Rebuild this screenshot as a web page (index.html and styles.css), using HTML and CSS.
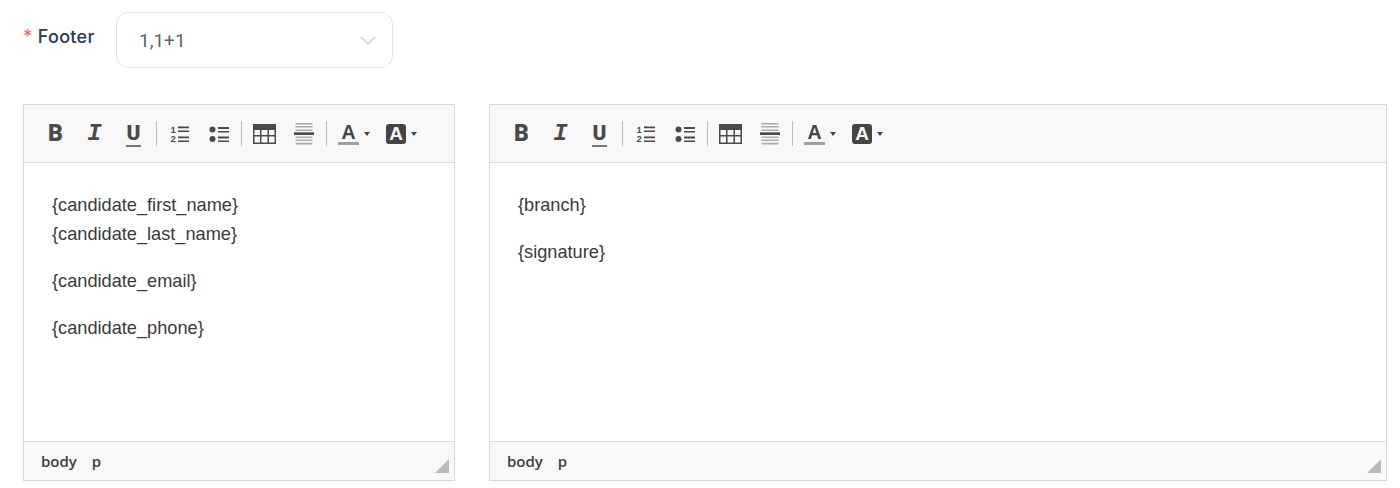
FILE: index.html
```html
<!DOCTYPE html>
<html lang="en">
<head>
<meta charset="utf-8">
<title>Footer</title>
<link rel="stylesheet" href="styles.css">
</head>
<body>
<svg class="defs" width="0" height="0" aria-hidden="true">
  <symbol id="i-ul" viewBox="0 0 20 18">
    <circle cx="3.500" cy="4.500" r="3"/><circle cx="3.500" cy="14" r="3"/>
    <path d="M9 2h11v2H9zM9 6h11v1.500H9zM9 11.500h11v2H9zM9 15.500h11V17H9z"/>
  </symbol>
  <symbol id="i-ol" viewBox="0 0 18 18">
    <path d="M7 1.500h11v1.700H7zM7 5.500h11V7H7zM7 11.500h11v1.700H7zM7 15.500h11V17H7z"/>
  </symbol>
  <symbol id="i-table" viewBox="0 0 23 20">
    <path fill-rule="evenodd" d="M0 0h23v20H0zM1.500 6v5h5.500V6zM8.500 6v5h6V6zM16 6v5h5.500V6zM1.500 12.500v6h5.500v-6zM8.500 12.500v6h6v-6zM16 12.500v6h5.500v-6z"/>
  </symbol>
  <symbol id="i-hr" viewBox="0 0 20 22">
    <path class="soft" d="M1.500 0h17v1.500h-17zM1.500 3h17v1.500h-17zM1.500 6.500h17V8h-17zM1.500 13.500h17V15h-17zM1.500 16.500h17V18h-17zM1.500 19.800h17v1.700h-17z"/>
    <path d="M0 9.300h20V12H0z"/>
  </symbol>
</svg>

<main class="page">
  <div class="field">
    <label class="field-label"><span class="req">*</span> Footer</label>
    <div class="select">
      <span class="select-value">1,1+1</span>
      <svg class="chevron" width="16" height="9" viewBox="0 0 16 9"><path d="M1 1l7 7 7-7" fill="none" stroke="currentColor" stroke-width="1.100"/></svg>
    </div>
  </div>

  <div class="editors">
    <section class="editor editor-narrow">
      <div class="toolbar">
        <span class="tool"><span class="glyph">B</span></span>
        <span class="tool"><span class="glyph italic">I</span></span>
        <span class="tool"><span class="glyph under">U</span></span>
        <i class="sep"></i>
        <span class="tool"><span class="ol"><span class="nums">1<br>2</span><svg class="ic" width="18" height="18"><use href="#i-ol"/></svg></span></span>
        <span class="tool"><svg class="ic" width="20" height="18"><use href="#i-ul"/></svg></span>
        <i class="sep"></i>
        <span class="tool"><svg class="ic" width="23" height="20"><use href="#i-table"/></svg></span>
        <span class="tool"><svg class="ic" width="20" height="22"><use href="#i-hr"/></svg></span>
        <i class="sep"></i>
        <span class="tool split"><span class="fore">A</span><b class="caret"></b></span>
        <span class="tool split"><span class="back">A</span><b class="caret"></b></span>
      </div>
      <div class="content">
        <p>{candidate_first_name}<br>{candidate_last_name}</p>
        <p>{candidate_email}</p>
        <p>{candidate_phone}</p>
      </div>
      <div class="status"><span>body</span><span>p</span><i class="grip"></i></div>
    </section>

    <section class="editor editor-wide">
      <div class="toolbar">
        <span class="tool"><span class="glyph">B</span></span>
        <span class="tool"><span class="glyph italic">I</span></span>
        <span class="tool"><span class="glyph under">U</span></span>
        <i class="sep"></i>
        <span class="tool"><span class="ol"><span class="nums">1<br>2</span><svg class="ic" width="18" height="18"><use href="#i-ol"/></svg></span></span>
        <span class="tool"><svg class="ic" width="20" height="18"><use href="#i-ul"/></svg></span>
        <i class="sep"></i>
        <span class="tool"><svg class="ic" width="23" height="20"><use href="#i-table"/></svg></span>
        <span class="tool"><svg class="ic" width="20" height="22"><use href="#i-hr"/></svg></span>
        <i class="sep"></i>
        <span class="tool split"><span class="fore">A</span><b class="caret"></b></span>
        <span class="tool split"><span class="back">A</span><b class="caret"></b></span>
      </div>
      <div class="content">
        <p>{branch}</p>
        <p>{signature}</p>
      </div>
      <div class="status"><span>body</span><span>p</span><i class="grip"></i></div>
    </section>
  </div>
</main>
</body>
</html>
```
FILE: styles.css
```css
* { box-sizing: border-box; }
html, body { margin: 0; height: 100%; background: #fff; overflow: hidden; }
.defs { position: absolute; }
.page { padding: 12px 13px 0 23px; font-family: "Liberation Sans", Arial, sans-serif; }

.field { display: flex; align-items: flex-start; }
.field-label {
  width: 93px;
  padding-top: 13px;
  font: 500 18px/24px Inter, sans-serif;
  letter-spacing: 0.3px;
  color: #2c3a52;
}
.req { color: #f56c6c; }
.select {
  width: 277px;
  height: 56px;
  display: flex;
  align-items: center;
  justify-content: space-between;
  padding: 0 16px 0 22px;
  border: 1px solid #e3e5ec;
  border-radius: 12px;
  color: #5d6470;
}
.select-value {
  padding-top: 1px;
  font: 400 19px/24px Roboto, sans-serif;
}
.chevron { color: #c3c7cf; }

.editors { display: flex; gap: 34px; margin-top: 36px; }
.editor {
  position: relative;
  height: 377px;
  display: flex;
  flex-direction: column;
  border: 1px solid #d8d8d8;
}
.editor-narrow { width: 432px; flex: none; }
.editor-wide { flex: 1; }

.toolbar {
  height: 58px;
  flex: none;
  display: flex;
  align-items: center;
  padding-left: 12px;
  background: #f8f8f8;
  border-bottom: 1px solid #dcdcdc;
}
.tool {
  width: 39px;
  height: 30px;
  flex: none;
  display: flex;
  align-items: center;
  justify-content: center;
  color: #444;
}
.ic { fill: #4a4a4a; }
.soft { fill: #ababab; }
.glyph {
  font: 900 23px/26px Roboto, sans-serif;
  color: #4a4a4a;
}
.italic { font: italic 700 24px/26px "Liberation Mono", monospace; }
.under {
  font-size: 21px;
  line-height: 21px;
  padding: 0 1px 1px;
  border-bottom: 2px solid #777;
  margin-top: 2px;
}
.ol { position: relative; display: block; width: 18px; height: 18px; }
.nums {
  position: absolute;
  left: 0;
  top: 0;
  font: 700 9.500px/9.500px "Liberation Sans", sans-serif;
  color: #4a4a4a;
}
.sep { width: 1px; height: 25px; flex: none; margin: 0 3px; background: #bcbcbc; }
.split { width: 48px; justify-content: flex-start; padding-left: 8px; gap: 5px; }
.fore {
  width: 21px;
  height: 21px;
  margin-top: 1px;
  font: 700 19.500px/17px "Liberation Sans", sans-serif;
  text-align: center;
  color: #444;
  border-bottom: 3px solid #a0a0a0;
}
.back {
  width: 20px;
  height: 20px;
  border-radius: 3px;
  background: #444;
  color: #f7f7f7;
  font: 700 19px/20px "Liberation Sans", sans-serif;
  text-align: center;
}
.caret {
  width: 0;
  height: 0;
  border-left: 3.500px solid transparent;
  border-right: 3.500px solid transparent;
  border-top: 4px solid #444;
}

.content {
  flex: 1;
  padding: 28px 28px 0;
  background: #fff;
  font-size: 18.200px;
  line-height: 29px;
  color: #3a3a3a;
}
.content p { margin: 0 0 18px; }

.status {
  position: relative;
  height: 39px;
  flex: none;
  display: flex;
  align-items: center;
  gap: 15px;
  padding-left: 17px;
  background: #f8f8f8;
  border-top: 1px solid #dcdcdc;
  font: 600 15px/20px "Open Sans", sans-serif;
  color: #3f3f3f;
}
.grip {
  position: absolute;
  right: 5px;
  bottom: 7px;
  width: 14px;
  height: 14px;
  background: #bbb;
  clip-path: polygon(100% 0, 100% 100%, 0 100%);
}
```
